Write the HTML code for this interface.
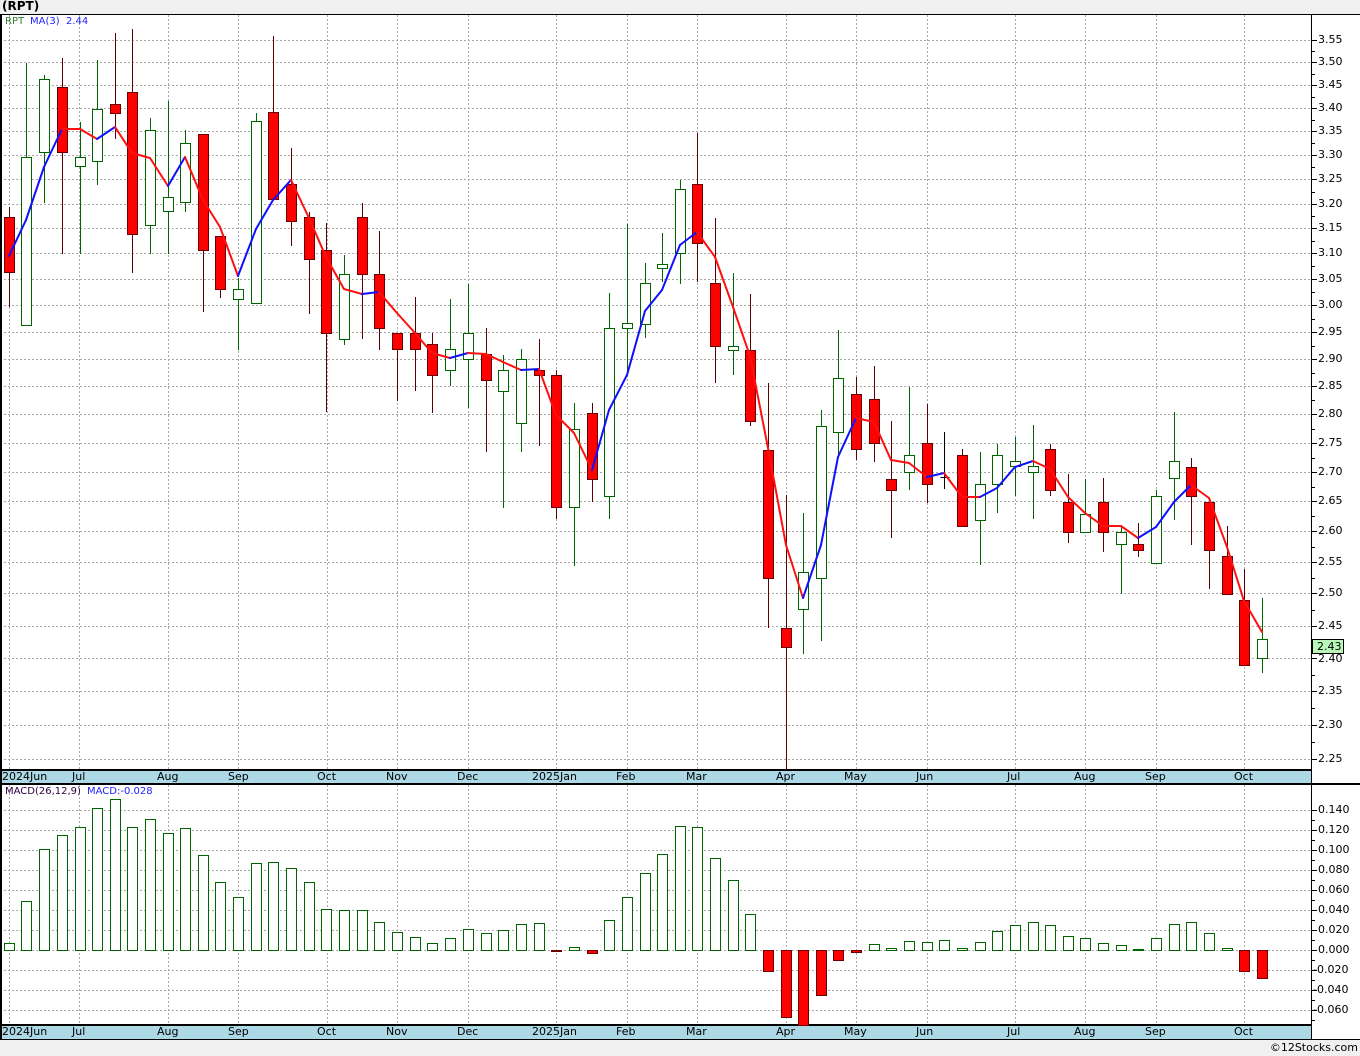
<!DOCTYPE html>
<html><head><meta charset="utf-8">
<style>
html,body{margin:0;padding:0;}
body{width:1360px;height:1056px;background:#f0f0f0;position:relative;overflow:hidden;font-family:"DejaVu Sans","Liberation Sans",sans-serif;}
svg{position:absolute;left:0;top:0;}
.t{position:absolute;font-size:11px;line-height:13px;white-space:nowrap;color:#000;}
.pl{position:absolute;left:1318px;font-size:11px;line-height:13px;color:#000;}
.ml{position:absolute;left:1318px;font-size:11px;line-height:13px;color:#000;white-space:nowrap;}
.neg{left:1313px;}
</style></head><body>
<svg id="s" width="1360" height="1056" xmlns="http://www.w3.org/2000/svg">
<rect x="0" y="14" width="1360" height="1026" fill="#fff"/>
<g id="grid" stroke="#a8a8a8" stroke-width="1" stroke-dasharray="2,2"></g>
<rect x="0" y="770" width="1311" height="14" fill="#add8e6"/>
<rect x="0" y="1025" width="1311" height="14" fill="#add8e6"/>
<g stroke="#000" stroke-width="2">
<line x1="0" y1="14.5" x2="1360" y2="14.5" stroke-width="1"/>
<line x1="1" y1="14" x2="1" y2="1040"/>
<line x1="0" y1="770" x2="1311" y2="770"/>
<line x1="0" y1="784" x2="1360" y2="784"/>
<line x1="0" y1="1025" x2="1311" y2="1025"/>
<line x1="0" y1="1039.5" x2="1360" y2="1039.5" stroke-width="1"/>
<line x1="1311.5" y1="14" x2="1311.5" y2="1040" stroke-width="1"/>
</g>
<g id="ticks" stroke="#000" stroke-width="1"></g>
<g id="macd"></g>
<g id="cand"></g>
<g id="ma" stroke-width="2" fill="none"></g>
<rect x="1312.5" y="639.5" width="31" height="14" fill="#b9f7b9" stroke="#000"/>
</svg>

<div class="t" style="left:2px;top:0px;font-weight:bold;font-size:12px;">(RPT)</div>
<div class="t" style="left:5px;top:15px;font-size:10px;color:#2e7d32;">RPT</div>
<div class="t" style="left:30px;top:15px;font-size:10px;color:#2222ff;">MA(3)&nbsp;&nbsp;2.44</div>
<div class="t" style="left:5px;top:785px;font-size:10px;color:#300040;">MACD(26,12,9)</div>
<div class="t" style="left:87px;top:785px;font-size:10px;color:#2222ff;">MACD:-0.028</div>

<div class="t" style="left:2px;top:770px;">2024Jun</div>
<div class="t" style="left:72px;top:770px;">Jul</div>
<div class="t" style="left:157px;top:770px;">Aug</div>
<div class="t" style="left:228px;top:770px;">Sep</div>
<div class="t" style="left:317px;top:770px;">Oct</div>
<div class="t" style="left:386px;top:770px;">Nov</div>
<div class="t" style="left:457px;top:770px;">Dec</div>
<div class="t" style="left:532px;top:770px;">2025Jan</div>
<div class="t" style="left:616px;top:770px;">Feb</div>
<div class="t" style="left:686px;top:770px;">Mar</div>
<div class="t" style="left:776px;top:770px;">Apr</div>
<div class="t" style="left:844px;top:770px;">May</div>
<div class="t" style="left:916px;top:770px;">Jun</div>
<div class="t" style="left:1007px;top:770px;">Jul</div>
<div class="t" style="left:1074px;top:770px;">Aug</div>
<div class="t" style="left:1145px;top:770px;">Sep</div>
<div class="t" style="left:1234px;top:770px;">Oct</div>

<div class="t" style="left:2px;top:1025px;">2024Jun</div>
<div class="t" style="left:72px;top:1025px;">Jul</div>
<div class="t" style="left:157px;top:1025px;">Aug</div>
<div class="t" style="left:228px;top:1025px;">Sep</div>
<div class="t" style="left:317px;top:1025px;">Oct</div>
<div class="t" style="left:386px;top:1025px;">Nov</div>
<div class="t" style="left:457px;top:1025px;">Dec</div>
<div class="t" style="left:532px;top:1025px;">2025Jan</div>
<div class="t" style="left:616px;top:1025px;">Feb</div>
<div class="t" style="left:686px;top:1025px;">Mar</div>
<div class="t" style="left:776px;top:1025px;">Apr</div>
<div class="t" style="left:844px;top:1025px;">May</div>
<div class="t" style="left:916px;top:1025px;">Jun</div>
<div class="t" style="left:1007px;top:1025px;">Jul</div>
<div class="t" style="left:1074px;top:1025px;">Aug</div>
<div class="t" style="left:1145px;top:1025px;">Sep</div>
<div class="t" style="left:1234px;top:1025px;">Oct</div>

<div class="pl" style="top:33px">3.55</div>
<div class="pl" style="top:55px">3.50</div>
<div class="pl" style="top:78px">3.45</div>
<div class="pl" style="top:101px">3.40</div>
<div class="pl" style="top:124px">3.35</div>
<div class="pl" style="top:148px">3.30</div>
<div class="pl" style="top:172px">3.25</div>
<div class="pl" style="top:197px">3.20</div>
<div class="pl" style="top:221px">3.15</div>
<div class="pl" style="top:246px">3.10</div>
<div class="pl" style="top:272px">3.05</div>
<div class="pl" style="top:298px">3.00</div>
<div class="pl" style="top:325px">2.95</div>
<div class="pl" style="top:352px">2.90</div>
<div class="pl" style="top:379px">2.85</div>
<div class="pl" style="top:407px">2.80</div>
<div class="pl" style="top:436px">2.75</div>
<div class="pl" style="top:465px">2.70</div>
<div class="pl" style="top:494px">2.65</div>
<div class="pl" style="top:524px">2.60</div>
<div class="pl" style="top:555px">2.55</div>
<div class="pl" style="top:586px">2.50</div>
<div class="pl" style="top:619px">2.45</div>
<div class="pl" style="top:652px">2.40</div>
<div class="pl" style="top:684px">2.35</div>
<div class="pl" style="top:718px">2.30</div>
<div class="pl" style="top:752px">2.25</div>
<div class="pl" style="top:640px;left:1317px;">2.43</div>

<div class="ml" style="top:803px">0.140</div>
<div class="ml" style="top:823px">0.120</div>
<div class="ml" style="top:843px">0.100</div>
<div class="ml" style="top:863px">0.080</div>
<div class="ml" style="top:883px">0.060</div>
<div class="ml" style="top:903px">0.040</div>
<div class="ml" style="top:923px">0.020</div>
<div class="ml" style="top:943px">0.000</div>
<div class="ml neg" style="top:963px">-0.020</div>
<div class="ml neg" style="top:983px">-0.040</div>
<div class="ml neg" style="top:1003px">-0.060</div>

<div class="t" style="right:2px;top:1041px;font-size:11px;">©12Stocks.com</div>

<script>
var NS="http://www.w3.org/2000/svg";
function el(p,t,a){var e=document.createElementNS(NS,t);for(var k in a)e.setAttribute(k,a[k]);p.appendChild(e);return e;}
var g=document.getElementById('grid'),tk=document.getElementById('ticks');
var PY=[40,62,85,108,131,155,179,204,228,253,279,305,332,359,386,414,443,472,501,531,562,593,626,658,691,725,759];
PY.forEach(function(y,i){el(g,'line',{x1:0,y1:y+.5,x2:1311,y2:y+.5});el(tk,'line',{x1:1311,y1:y+.5,x2:1317,y2:y+.5});
 if(i<PY.length-1){var m=Math.round((y+PY[i+1])/2);el(tk,'line',{x1:1311,y1:m+.5,x2:1315,y2:m+.5});}});
for(var v=0;v<11;v++){var y=810+v*20;el(g,'line',{x1:0,y1:y+.5,x2:1311,y2:y+.5});el(tk,'line',{x1:1311,y1:y+.5,x2:1317,y2:y+.5});el(tk,'line',{x1:1311,y1:y+10.5,x2:1315,y2:y+10.5});}
[9,79,168,238,327,397,468,556,627,697,786,856,927,1015,1085,1156,1244].forEach(function(x){
 el(g,'line',{x1:x+.5,y1:15,x2:x+.5,y2:770});el(g,'line',{x1:x+.5,y1:785,x2:x+.5,y2:1025});});
var C=[[9,217,272,207,307,'r'],[26,157,325,63,325,'g'],[44,79,152,75,203,'g'],[62,87,152,58,254,'r'],[80,157,166,122,254,'g'],[97,109,161,60,185,'g'],[115,104,113,33,139,'r'],[132,92,234,29,273,'r'],[150,130,225,118,254,'g'],[168,197,211,101,254,'g'],[185,143,202,130,212,'g'],[203,134,250,134,312,'r'],[220,236,289,236,298,'r'],[238,289,299,278,350,'g'],[256,121,303,113,303,'g'],[273,112,199,36,199,'r'],[291,184,221,148,246,'r'],[309,217,259,212,314,'r'],[326,250,333,223,412,'r'],[344,274,339,255,345,'g'],[362,217,274,203,339,'r'],[379,274,328,231,350,'r'],[397,333,349,333,401,'r'],[415,333,349,297,391,'r'],[432,344,375,333,413,'r'],[450,349,370,299,386,'g'],[468,333,359,284,408,'g'],[486,354,380,328,452,'r'],[503,370,391,355,508,'g'],[521,359,423,349,452,'g'],[539,370,375,339,446,'r'],[556,375,507,370,519,'r'],[574,429,507,403,566,'g'],[592,413,479,403,502,'r'],[609,328,496,293,519,'g'],[627,323,328,224,371,'g'],[645,283,324,263,338,'g'],[662,264,268,233,282,'g'],[680,189,253,180,284,'g'],[697,184,243,133,282,'r'],[715,283,346,218,383,'r'],[733,346,350,273,375,'g'],[750,350,421,294,426,'r'],[768,450,578,383,628,'r'],[786,628,647,495,770,'r'],[803,572,609,513,654,'g'],[821,426,578,410,641,'g'],[838,378,432,330,457,'g'],[856,394,449,377,460,'r'],[874,399,443,366,462,'r'],[891,479,490,421,538,'r'],[909,455,472,387,490,'g'],[927,443,484,404,503,'r'],[944,477,479,432,489,'k'],[962,455,526,449,526,'r'],[980,484,520,452,565,'g'],[997,455,484,444,513,'g'],[1015,461,466,437,496,'g'],[1033,466,472,425,519,'g'],[1050,449,490,444,496,'r'],[1068,502,532,474,543,'r'],[1085,514,532,479,532,'g'],[1103,502,532,478,552,'r'],[1121,532,544,527,594,'g'],[1138,544,550,523,557,'r'],[1156,496,563,490,563,'g'],[1174,461,478,412,520,'g'],[1191,467,496,458,545,'r'],[1209,502,550,502,589,'r'],[1227,556,594,526,594,'r'],[1244,600,665,569,665,'r'],[1262,639,658,598,673,'g']];
var cg=document.getElementById('cand');
C.forEach(function(c){var x=c[0]+.5;
 if(c[5]=='k'){el(cg,'line',{x1:x,y1:c[3],x2:x,y2:c[4],stroke:'#000','stroke-width':1});el(cg,'line',{x1:x-4,y1:c[1]+.5,x2:x+5,y2:c[1]+.5,stroke:'#000','stroke-width':1});return;}
 var w=c[5]=='r'?'#5a0000':'#006400';
 el(cg,'line',{x1:x,y1:c[3],x2:x,y2:c[4],stroke:w,'stroke-width':1});
 el(cg,'rect',{x:c[0]-4.5,y:c[1]+.5,width:10,height:Math.max(c[2]-c[1],2),fill:c[5]=='r'?'#ff0000':'#fff',stroke:c[5]=='r'?'#6a0000':'#006400','stroke-width':1});});
var M=[256,220,167,129,129,139,127,153,158,186,157,200,227,276,229,200,180,218,257,289,294,292,313,333,353,358,353,354,362,370,369,415,433,470,410,375,311,290,245,232,257,307,356,448,545,598,545,457,418,422,460,463,477,473,497,497,488,467,461,469,497,513,526,526,538,527,502,485,498,547,601,632];
var mg=document.getElementById('ma');
for(var i=0;i<M.length-1;i++){el(mg,'line',{x1:C[i][0],y1:M[i],x2:C[i+1][0],y2:M[i+1],stroke:M[i+1]<M[i]?'#1010ff':'#ff1010','stroke-linecap':'round'});}
var H=[943,901,849,835,827,808,799,827,819,833,828,855,882,897,863,862,868,882,909,910,910,922,932,937,943,938,929,933,930,924,923,951,947,953,920,897,873,854,826,827,858,880,914,971,1017,1025,995,960,952,944,948,941,942,940,948,942,931,925,922,925,936,938,943,945,949,938,924,922,933,948,971,978];
var hg=document.getElementById('macd');
H.forEach(function(y,i){var x=C[i][0]-4.5;
 if(y>950){el(hg,'rect',{x:x,y:950.5,width:10,height:Math.max(y-950,1),fill:'#ff0000',stroke:'#6a0000'});}
 else{el(hg,'rect',{x:x,y:y+.5,width:10,height:Math.max(950-y,1),fill:'#fff',stroke:'#006400'});}});
</script>
</body></html>
